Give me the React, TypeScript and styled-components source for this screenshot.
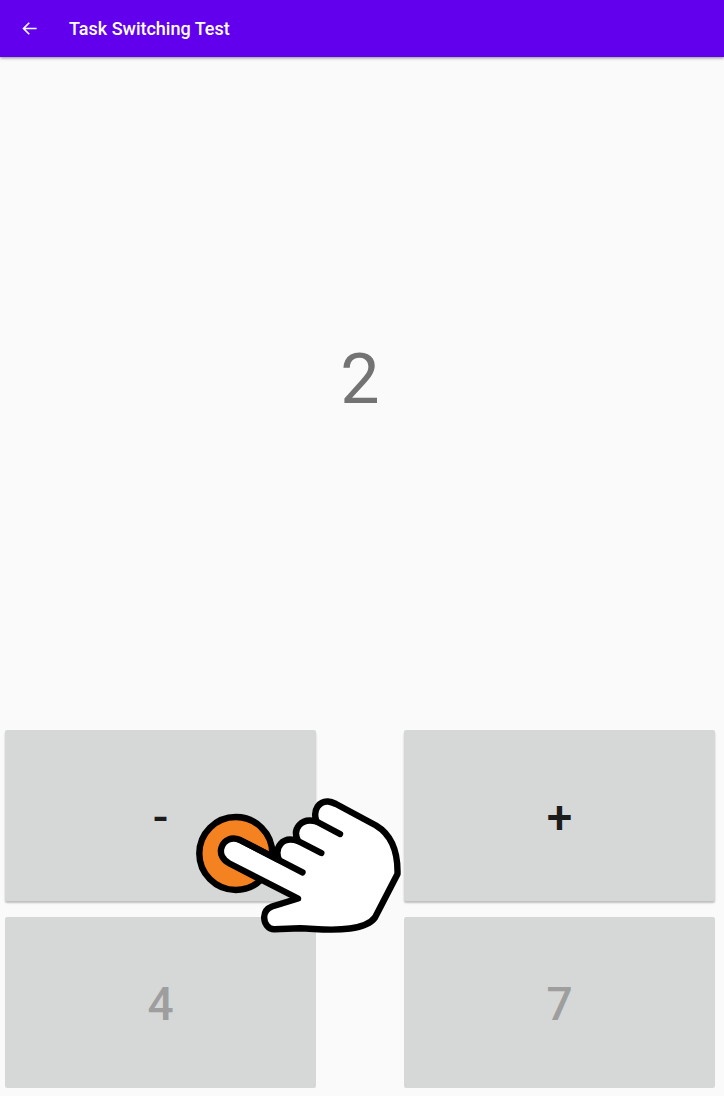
import React from "react";
import styled, { createGlobalStyle } from "styled-components";

const GlobalStyle = createGlobalStyle`
  *, *::before, *::after { box-sizing: border-box; }
  body { margin: 0; background: #fafafa; font-family: Roboto, "Liberation Sans", sans-serif; }
`;

const Screen = styled.div`
  display: flex;
  flex-direction: column;
  min-height: 100vh;
`;

const AppBar = styled.header`
  display: flex;
  align-items: center;
  gap: 30px;
  height: 57px;
  padding: 0 20px;
  background: #6200ee;
  color: #fff;
  box-shadow: 0 1px 3px rgba(0, 0, 0, 0.45);
`;

const BackButton = styled.button`
  display: flex;
  padding: 0;
  border: 0;
  background: none;
  color: inherit;
  cursor: pointer;
`;

const Title = styled.h1`
  margin: 0;
  font-size: 18px;
  font-weight: 500;
  line-height: 24px;
`;

const Stage = styled.main`
  display: flex;
  flex: 1;
  align-items: center;
  justify-content: center;
  padding: 0 4px 30px 0;
`;

const Stimulus = styled.p`
  margin: 0;
  color: #737373;
  font-size: 70px;
  line-height: 80px;
`;

const Pad = styled.section`
  position: relative;
  display: grid;
  grid-template-columns: 1fr 1fr;
  gap: 16px 88px;
  padding: 0 9px 8px 5px;
`;

const KeyButton = styled.button`
  height: 171px;
  padding: 2px 0 0;
  border: 0;
  border-radius: 2px;
  background: #d6d8d7;
  color: #1c1c1c;
  font-family: inherit;
  font-size: 46px;
  font-weight: 500;
  line-height: 56px;
  box-shadow: 0 2px 2px rgba(0, 0, 0, 0.24);
  cursor: pointer;

  &:disabled {
    color: #9e9e9e;
    box-shadow: none;
    cursor: default;
  }
`;

const TapHand = styled.svg`
  position: absolute;
  top: 60px;
  left: 190px;
  pointer-events: none;
`;

const keys = [
  { label: "-", disabled: false },
  { label: "+", disabled: false },
  { label: "4", disabled: true },
  { label: "7", disabled: true },
];

export default function App() {
  return (
    <Screen>
      <GlobalStyle />
      <AppBar>
        <BackButton type="button" aria-label="Back">
          <svg width="19" height="19" viewBox="0 0 24 24" fill="currentColor" aria-hidden="true">
            <path d="M21 11H6.8l5.6-5.6L11 4l-8 8 8 8 1.4-1.4L6.8 13H21z" />
          </svg>
        </BackButton>
        <Title>Task Switching Test</Title>
      </AppBar>
      <Stage>
        <Stimulus>2</Stimulus>
      </Stage>
      <Pad>
        {keys.map((key) => (
          <KeyButton key={key.label} type="button" disabled={key.disabled}>
            {key.label}
          </KeyButton>
        ))}
        <TapHand
          width="220"
          height="150"
          viewBox="190 790 220 150"
          stroke="#000"
          strokeWidth="6.4"
          strokeLinecap="round"
          strokeLinejoin="round"
          aria-hidden="true"
        >
          <circle cx="235.8" cy="853.5" r="36.5" fill="#f58220" />
          <path
            fill="#fff"
            d="M298 898.5L229.500 863.500C222.500 860 219.500 853.500 221.500 847.500C224 839.500 232 836.500 240 840L279 860C274 848 282 835.500 298 841C292 829 301 817 316.500 821.500C312 809 320 801 328 801.500C331 801.700 333.500 802.800 336 804L376 825.500C391 834.500 398 852 397.500 874L375 917.500C371 923 361 927 350 928.500C330 931.300 315 928.500 300 928.300L274.500 929.300C268 929.500 264 923 264.200 917C264.500 911 268 908 272 906.500Z"
          />
          <path fill="none" d="M240 840L302.500 872.300M298 841L321.300 853M316.500 821.500L340 834" />
        </TapHand>
      </Pad>
    </Screen>
  );
}
